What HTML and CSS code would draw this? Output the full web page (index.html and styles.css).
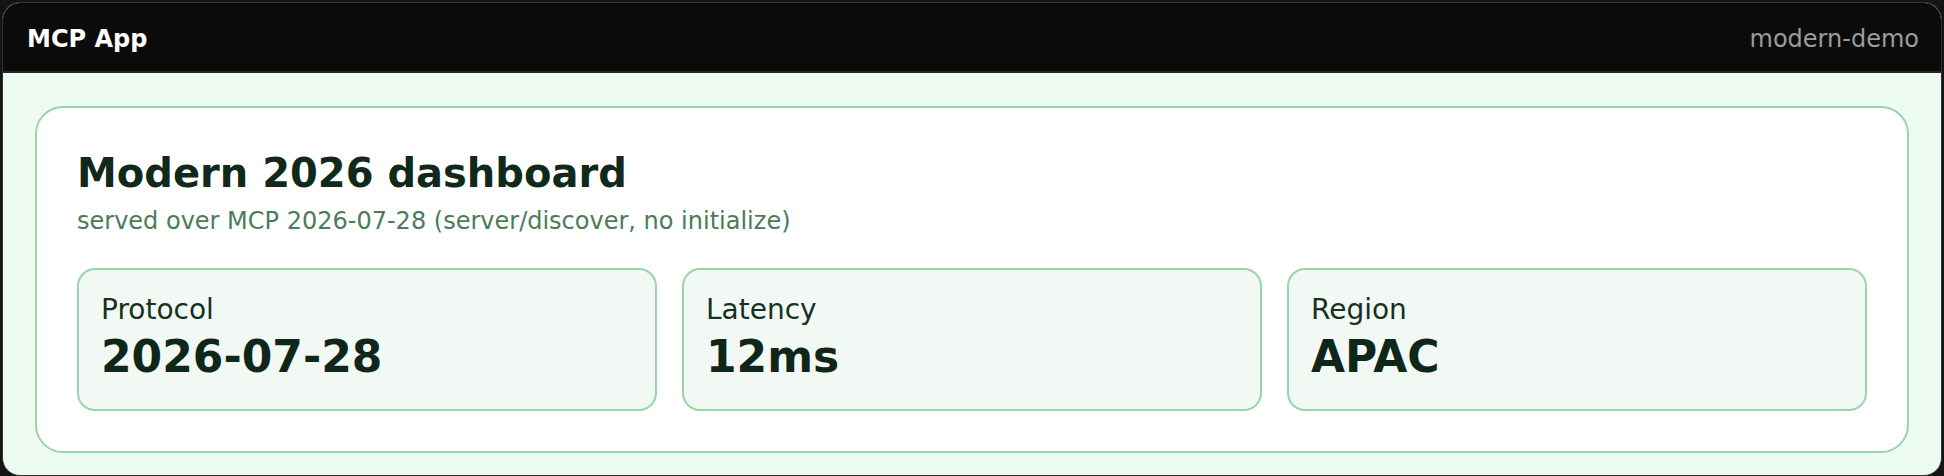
FILE: index.html
```html
<!DOCTYPE html>
<html lang="en">
  <head>
    <meta charset="UTF-8" />
    <meta name="viewport" content="width=device-width, initial-scale=1.0" />
    <title>MCP App</title>
    <link rel="stylesheet" href="styles.css">
  </head>
  <body>
    <div class="app">
      <header class="topbar">
        <span class="brand">MCP App</span>
        <span class="server">modern-demo</span>
      </header>

      <main class="content">
        <section class="panel">
          <h1>Modern 2026 dashboard</h1>
          <p class="sub">served over MCP 2026-07-28 (server/discover, no initialize)</p>

          <div class="stats">
            <div class="stat">
              <div class="label">Protocol</div>
              <div class="value">2026-07-28</div>
            </div>
            <div class="stat">
              <div class="label">Latency</div>
              <div class="value">12ms</div>
            </div>
            <div class="stat">
              <div class="label">Region</div>
              <div class="value">APAC</div>
            </div>
          </div>
        </section>
      </main>
    </div>
  </body>
</html>
```

FILE: styles.css
```css
body {
  background: #141414;
  font-family: "DejaVu Sans", Verdana, sans-serif;
  margin: 0;
  padding: 2px;
}
.app {
  border: 1px solid #323232;
  border-radius: 18px;
  overflow: hidden;
  background: #edfbf1;
}
.topbar {
  display: flex;
  justify-content: space-between;
  align-items: center;
  height: 65px;
  padding: 3px 22px 0 24px;
  background: #0b0b0b;
  border-bottom: 2px solid #262626;
  font-size: 24px;
}
.brand {
  color: #ffffff;
  font-weight: bold;
}
.server {
  color: #9c9c9c;
}
.content {
  padding: 33px 32px 22px;
}
.panel {
  background: #ffffff;
  border: 2px solid #9bd3aa;
  border-radius: 28px;
  padding: 42px 40px 40px;
}
h1 {
  margin: 0 0 11px;
  font-size: 40px;
  color: #11291a;
}
.sub {
  margin: 0 0 33px;
  font-size: 24px;
  color: #4b7c59;
}
.stats {
  display: grid;
  grid-template-columns: repeat(3, 1fr);
  gap: 25px;
}
.stat {
  background: #f2f9f4;
  border: 2px solid #9bd3aa;
  border-radius: 18px;
  padding: 23px 22px 27px;
}
.label {
  font-size: 28px;
  color: #17301f;
  margin-bottom: 5px;
}
.value {
  font-size: 44px;
  font-weight: bold;
  color: #0f2718;
}
```
